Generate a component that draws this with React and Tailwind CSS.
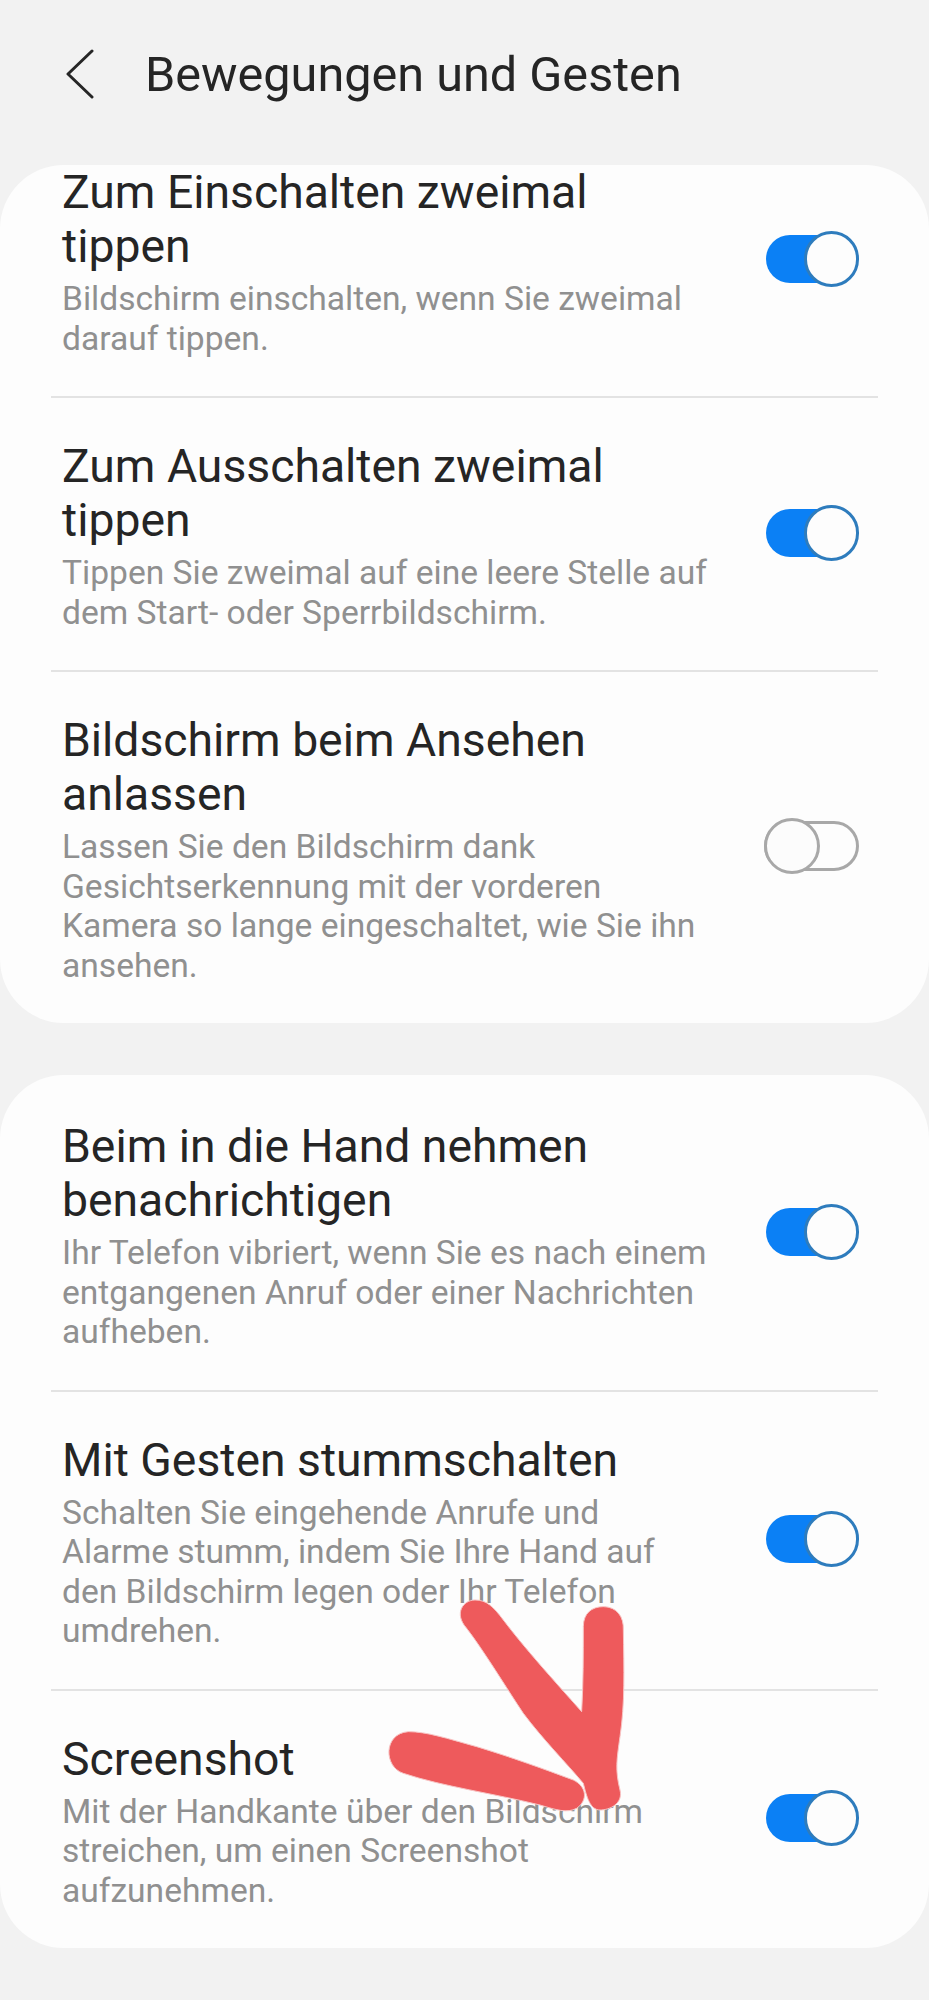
const GROUPS = [
  [
    { title: 'Zum Einschalten zweimal\ntippen', text: 'Bildschirm einschalten, wenn Sie zweimal\ndarauf tippen.', on: true, first: true },
    { title: 'Zum Ausschalten zweimal\ntippen', text: 'Tippen Sie zweimal auf eine leere Stelle auf\ndem Start- oder Sperrbildschirm.', on: true },
    { title: 'Bildschirm beim Ansehen\nanlassen', text: 'Lassen Sie den Bildschirm dank\nGesichtserkennung mit der vorderen\nKamera so lange eingeschaltet, wie Sie ihn\nansehen.', on: false },
  ],
  [
    { title: 'Beim in die Hand nehmen\nbenachrichtigen', text: 'Ihr Telefon vibriert, wenn Sie es nach einem\nentgangenen Anruf oder einer Nachrichten\naufheben.', on: true, top: true },
    { title: 'Mit Gesten stummschalten', text: 'Schalten Sie eingehende Anrufe und\nAlarme stumm, indem Sie Ihre Hand auf\nden Bildschirm legen oder Ihr Telefon\numdrehen.', on: true },
    { title: 'Screenshot', text: 'Mit der Handkante über den Bildschirm\nstreichen, um einen Screenshot\naufzunehmen.', on: true },
  ],
]

function Toggle({ on }) {
  if (on) {
    return (
      <div className="relative mb-[6px] h-[56px] w-[93px] shrink-0">
        <div className="absolute left-0 right-[2px] top-[4px] h-[48px] rounded-full bg-[#0b80f5]" />
        <div className="absolute right-0 top-0 h-[56px] w-[55px] rounded-full border-[3px] border-[#2e7cbd] bg-[#fdfdfd]" />
      </div>
    )
  }
  return (
    <div className="relative mb-[6px] h-[56px] w-[95px] shrink-0">
      <div className="absolute left-0 right-0 top-[3px] h-[50px] rounded-full border-[3px] border-[#a8a8a8]" />
      <div className="absolute left-0 top-0 h-[56px] w-[56px] rounded-full border-[3px] border-[#a8a8a8] bg-[#fcfcfc]" />
    </div>
  )
}

function Row({ item, last }) {
  return (
    <div className={item.first ? '-mt-[41px]' : ''}>
      <div className={`flex items-center justify-between pb-[38px] pl-[62px] pr-[70px] ${item.top ? 'pt-[44px]' : 'pt-[41px]'}`}>
        <div>
          <div className="whitespace-pre-line text-[46.3px] leading-[54px] text-[#252525]">{item.title}</div>
          <div className="mt-[6px] whitespace-pre-line text-[33.6px] leading-[39.5px] text-[#909090]">{item.text}</div>
        </div>
        <Toggle on={item.on} />
      </div>
      {!last && <div className="mx-[51px] h-[2px] bg-[#e3e3e3]" />}
    </div>
  )
}

export default function App() {
  return (
    <div className="relative min-h-[2000px] bg-[#f2f2f2] font-['Roboto',sans-serif]">
      <header className="flex h-[165px] items-start pl-[64px] pt-[49px]">
        <svg width="32" height="50" viewBox="0 0 32 50" fill="none" stroke="#262626" strokeWidth="3" strokeLinecap="round" strokeLinejoin="round">
          <path d="M28 2 L4 25 L28 48" />
        </svg>
        <h1 className="ml-[49px] mt-[1px] text-[48.6px] leading-[50px] text-[#252525]">Bewegungen und Gesten</h1>
      </header>

      <div className="flex flex-col gap-[52px]">
        {GROUPS.map((rows, i) => (
          <section key={i} className="overflow-hidden rounded-[64px] bg-[#fdfdfd]">
            {rows.map((item, j) => (
              <Row key={j} item={item} last={j === rows.length - 1} />
            ))}
          </section>
        ))}
      </div>

      {/* red marker arrow drawn over the screenshot */}
      <svg className="absolute left-[360px] top-[1570px]" width="300" height="280" viewBox="0 0 900 840" fill="#ee5a5c" stroke="#f8c4c4" strokeWidth="3">
        <path d="M145 485 C200 485 260 505 350 530 C450 560 560 600 640 630 C680 650 685 690 650 715 C620 730 590 720 540 705 C400 670 250 650 130 610 C70 590 70 490 145 485 Z" />
        <path d="M345 90 C380 90 400 110 430 150 C490 230 580 330 665 425 C670 340 670 250 670 170 C670 130 695 110 730 110 C770 110 792 140 790 180 C792 300 795 400 780 500 C770 570 765 600 780 660 C790 700 750 720 720 720 C690 720 680 680 670 640 C620 580 550 510 490 430 C440 355 370 240 320 175 C280 130 310 90 345 90 Z" />
      </svg>
    </div>
  )
}
